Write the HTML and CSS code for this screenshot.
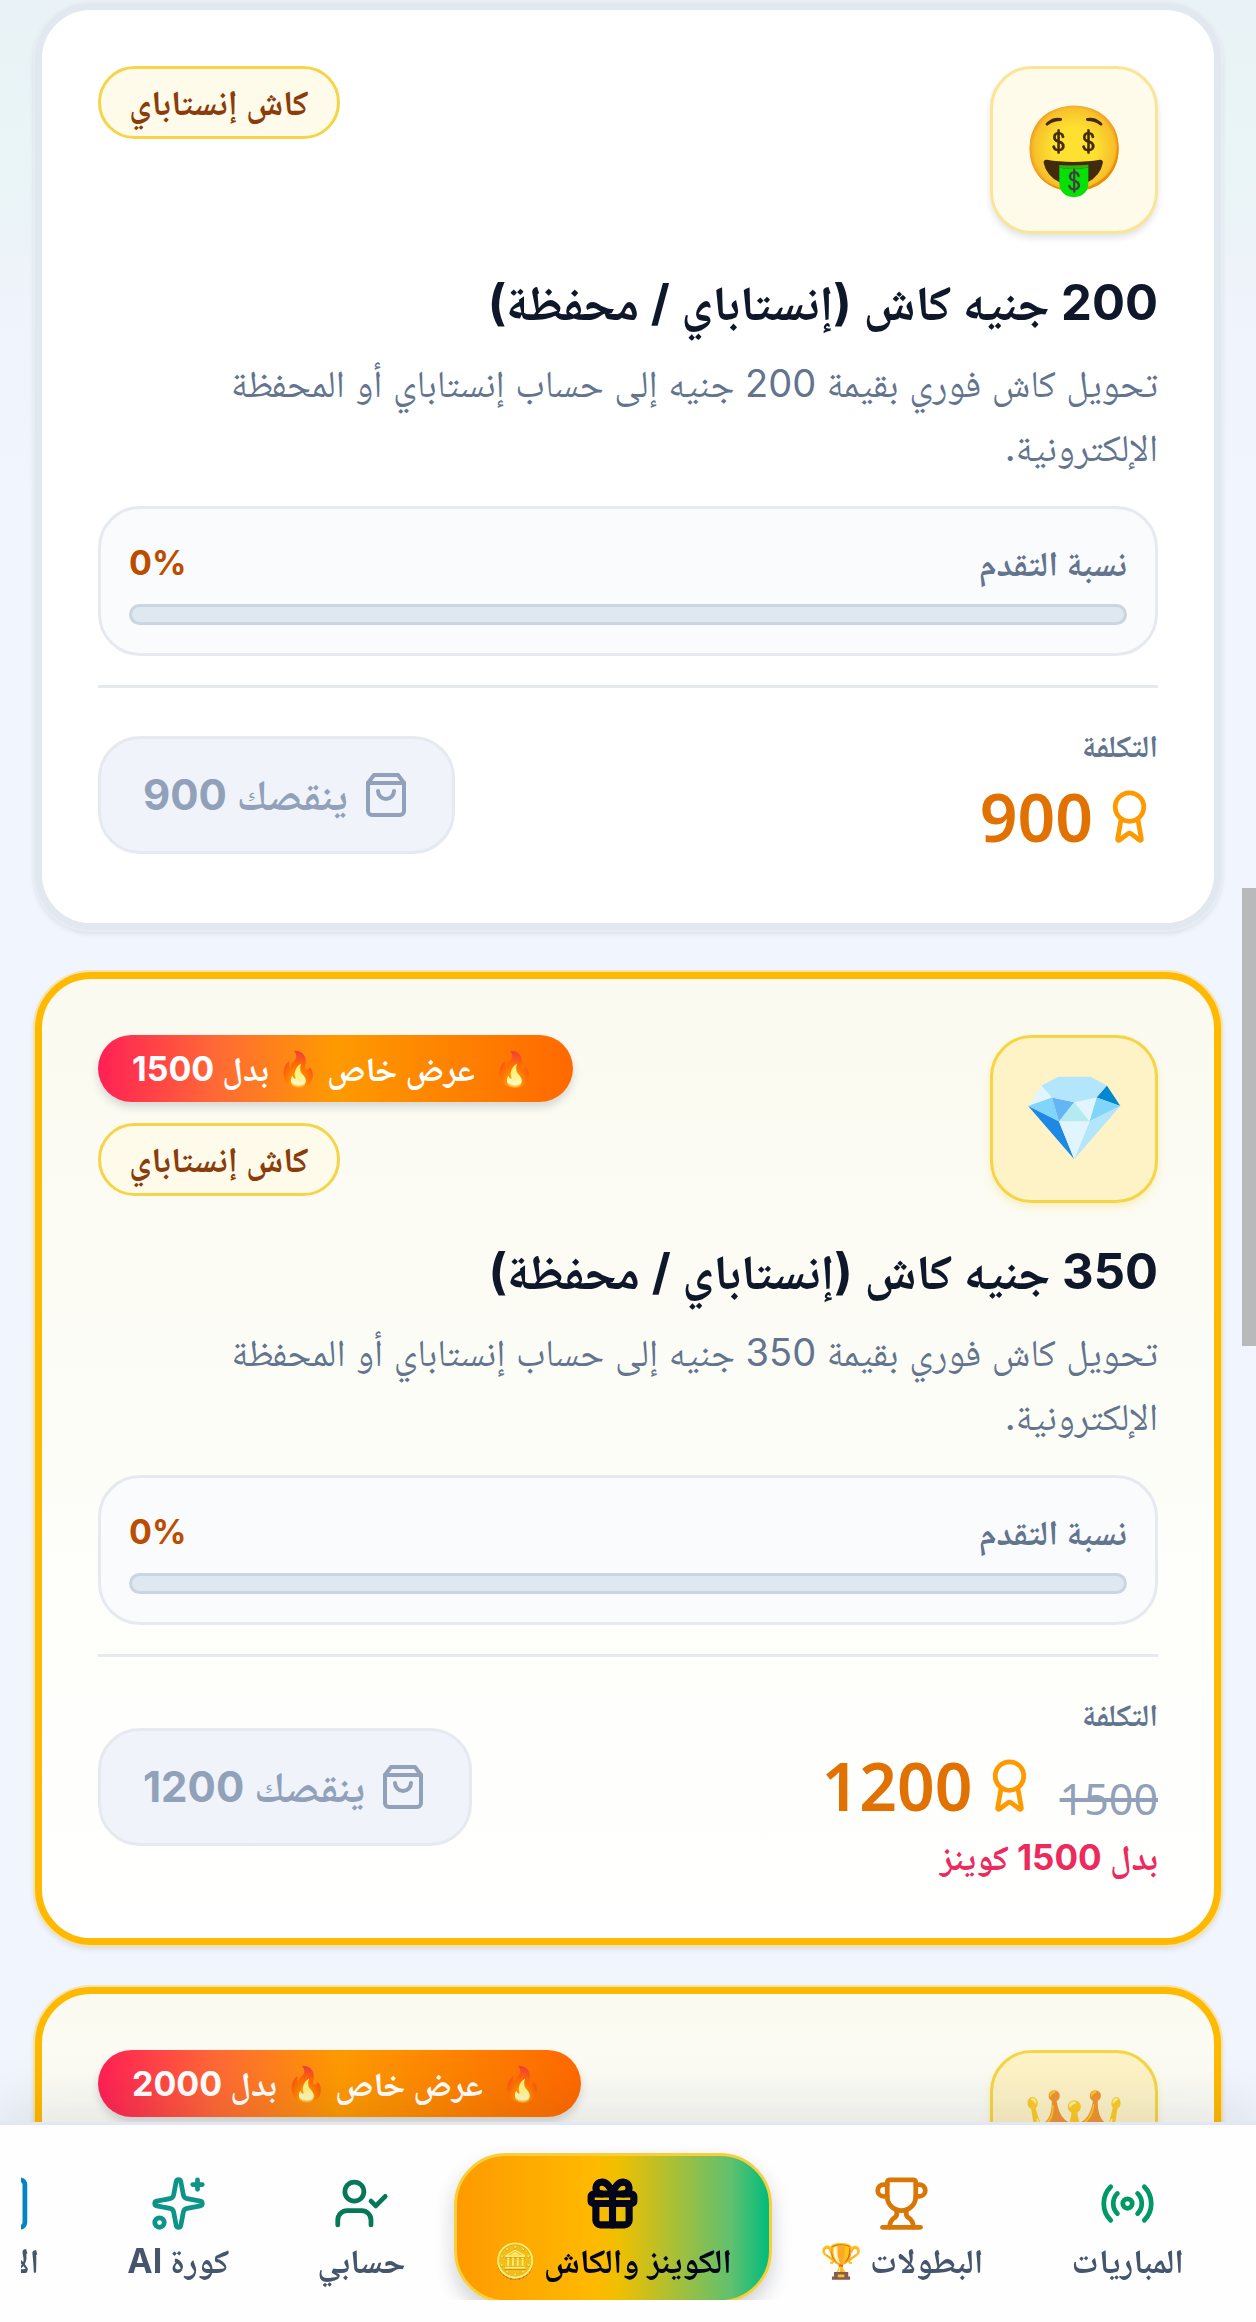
FILE: index.html
```html
<!DOCTYPE html>
<html lang="ar" dir="rtl">
<head>
  <meta charset="UTF-8">
  <meta name="viewport" content="width=device-width, initial-scale=1.0">
  <title>الكوينز والكاش</title>
  <link rel="stylesheet" href="styles.css">
</head>
<body>
  <svg class="icon-defs" aria-hidden="true">
    <symbol id="icon-award" viewBox="0 0 24 24">
      <path d="m15.477 12.89 1.515 8.526a.5.5 0 0 1-.81.47l-3.58-2.687a1 1 0 0 0-1.197 0l-3.586 2.686a.5.5 0 0 1-.81-.469l1.514-8.526" />
      <circle cx="12" cy="8" r="6" />
    </symbol>
    <symbol id="icon-bag" viewBox="0 0 24 24">
      <path d="M6 2 3 6v14a2 2 0 0 0 2 2h14a2 2 0 0 0 2-2V6l-3-4Z" />
      <path d="M3 6h18" />
      <path d="M16 10a4 4 0 0 1-8 0" />
    </symbol>
  </svg>

  <main class="rewards">
    <article class="card">
      <div class="card-head">
        <div class="card-emoji">🤑</div>
        <div class="card-badges">
          <span class="badge">كاش إنستاباي</span>
        </div>
      </div>
      <h3 class="card-title">200 جنيه كاش (إنستاباي / محفظة)</h3>
      <p class="card-text">تحويل كاش فوري بقيمة 200 جنيه إلى حساب إنستاباي أو المحفظة الإلكترونية.</p>
      <div class="progress">
        <div class="progress-row">
          <span>نسبة التقدم</span>
          <span class="progress-value" dir="ltr">0%</span>
        </div>
        <div class="progress-bar"></div>
      </div>
      <div class="card-footer">
        <div class="cost">
          <span class="cost-label">التكلفة</span>
          <div class="cost-row">
            <svg class="award"><use href="#icon-award" /></svg>
            <span class="price">900</span>
          </div>
        </div>
        <button type="button" class="buy-button" disabled>
          <svg class="bag"><use href="#icon-bag" /></svg>
          ينقصك 900
        </button>
      </div>
    </article>

    <article class="card card-offer">
      <div class="card-head">
        <div class="card-emoji">💎</div>
        <div class="card-badges">
          <span class="offer"><span>🔥</span> عرض خاص 🔥 بدل 1500</span>
          <span class="badge">كاش إنستاباي</span>
        </div>
      </div>
      <h3 class="card-title">350 جنيه كاش (إنستاباي / محفظة)</h3>
      <p class="card-text">تحويل كاش فوري بقيمة 350 جنيه إلى حساب إنستاباي أو المحفظة الإلكترونية.</p>
      <div class="progress">
        <div class="progress-row">
          <span>نسبة التقدم</span>
          <span class="progress-value" dir="ltr">0%</span>
        </div>
        <div class="progress-bar"></div>
      </div>
      <div class="card-footer">
        <div class="cost">
          <span class="cost-label">التكلفة</span>
          <div class="cost-row">
            <del class="old-price">1500</del>
            <svg class="award"><use href="#icon-award" /></svg>
            <span class="price">1200</span>
          </div>
          <span class="cost-note">بدل 1500 كوينز</span>
        </div>
        <button type="button" class="buy-button" disabled>
          <svg class="bag"><use href="#icon-bag" /></svg>
          ينقصك 1200
        </button>
      </div>
    </article>

    <article class="card card-offer">
      <div class="card-head">
        <div class="card-emoji">👑</div>
        <div class="card-badges">
          <span class="offer"><span>🔥</span> عرض خاص 🔥 بدل 2000</span>
        </div>
      </div>
    </article>
  </main>

  <div class="scrollbar"></div>

  <nav class="bottom-nav">
    <div class="nav-list">
      <a href="#" class="nav-item">
        <svg class="nav-icon matches" viewBox="0 0 24 24">
          <path d="M16.247 7.761a6 6 0 0 1 0 8.478" />
          <path d="M19.075 4.933a10 10 0 0 1 0 14.134" />
          <path d="M4.925 19.067a10 10 0 0 1 0-14.134" />
          <path d="M7.753 16.239a6 6 0 0 1 0-8.478" />
          <circle cx="12" cy="12" r="2" />
        </svg>
        <span>المباريات</span>
      </a>
      <a href="#" class="nav-item">
        <svg class="nav-icon cups" viewBox="0 0 24 24">
          <path d="M10 14.66v1.626a2 2 0 0 1-.976 1.696A5 5 0 0 0 7 21.978" />
          <path d="M14 14.66v1.626a2 2 0 0 0 .976 1.696A5 5 0 0 1 17 21.978" />
          <path d="M18 9h1.5a1 1 0 0 0 0-5H18" />
          <path d="M4 22h16" />
          <path d="M6 9a6 6 0 0 0 12 0V3a1 1 0 0 0-1-1H7a1 1 0 0 0-1 1z" />
          <path d="M6 9H4.5a1 1 0 0 1 0-5H6" />
        </svg>
        <span>البطولات 🏆</span>
      </a>
      <a href="#" class="nav-item nav-active">
        <svg class="nav-icon" viewBox="0 0 24 24">
          <rect x="3" y="8" width="18" height="4" rx="1" />
          <path d="M12 8v13" />
          <path d="M19 12v7a2 2 0 0 1-2 2H7a2 2 0 0 1-2-2v-7" />
          <path d="M7.5 8a2.5 2.5 0 0 1 0-5A4.8 8 0 0 1 12 8a4.8 8 0 0 1 4.5-5 2.5 2.5 0 0 1 0 5" />
        </svg>
        <span>الكوينز والكاش 🪙</span>
      </a>
      <a href="#" class="nav-item">
        <svg class="nav-icon account" viewBox="0 0 24 24">
          <path d="m16 11 2 2 4-4" />
          <path d="M16 21v-2a4 4 0 0 0-4-4H6a4 4 0 0 0-4 4v2" />
          <circle cx="9" cy="7" r="4" />
        </svg>
        <span>حسابي</span>
      </a>
      <a href="#" class="nav-item">
        <svg class="nav-icon ai" viewBox="0 0 24 24">
          <path d="M11.017 2.814a1 1 0 0 1 1.966 0l1.051 5.558a2 2 0 0 0 1.594 1.594l5.558 1.051a1 1 0 0 1 0 1.966l-5.558 1.051a2 2 0 0 0-1.594 1.594l-1.051 5.558a1 1 0 0 1-1.966 0l-1.051-5.558a2 2 0 0 0-1.594-1.594l-5.558-1.051a1 1 0 0 1 0-1.966l5.558-1.051a2 2 0 0 0 1.594-1.594z" />
          <path d="M20 2v4" />
          <path d="M22 4h-4" />
          <circle cx="4" cy="20" r="2" />
        </svg>
        <span>كورة AI</span>
      </a>
      <a href="#" class="nav-item nav-last">
        <svg class="nav-icon more" viewBox="0 0 24 24">
          <rect x="3" y="2" width="18" height="20" rx="2" />
        </svg>
        <span>الا</span>
      </a>
    </div>
  </nav>
</body>
</html>
```
FILE: styles.css
```css
* {
  box-sizing: border-box;
}
body {
  margin: 0;
  background: linear-gradient(#e9f2f6, #e9f5f6 160px, #eff3fb 300px, #f1f5fd 500px);
  font-family: Inter, "Noto Naskh Arabic", "Noto Sans", sans-serif;
  color: #0f172a;
}
svg {
  fill: none;
  stroke: currentColor;
  stroke-width: 2;
  stroke-linecap: round;
  stroke-linejoin: round;
}
.icon-defs {
  display: none;
}
.rewards {
  display: flex;
  flex-direction: column;
  gap: 42px;
  padding: 3px 35px 20px;
}
.card {
  padding: 56px;
  background-color: #ffffff;
  border: 7px solid #e2e8f0;
  border-radius: 56px;
  box-shadow: 0 0 0 2px #e8edf4, 0 3px 6px rgba(15, 23, 42, 0.12);
}
.card-offer {
  background: linear-gradient(#fafaf0, #fdfdf8 50%, #ffffff);
  border-color: #ffb900;
  box-shadow: 0 0 0 2px #f8e3a8, 0 3px 6px rgba(15, 23, 42, 0.15);
}
.card-head {
  display: flex;
  justify-content: space-between;
  align-items: flex-start;
}
.card-emoji {
  display: flex;
  align-items: center;
  justify-content: center;
  width: 168px;
  height: 168px;
  padding-bottom: 4px;
  font-size: 84px;
  line-height: 90px;
  background-color: #fffbeb;
  border: 3px solid #fae596;
  border-radius: 42px;
  box-shadow: 0 4px 6px rgba(15, 23, 42, 0.12);
}
.card-offer .card-emoji {
  background-color: #fef3c6;
  border-color: #f5d547;
  box-shadow: 0 4px 8px rgba(245, 213, 71, 0.3);
}
.card-badges {
  display: flex;
  flex-direction: column;
  align-items: flex-end;
  gap: 21px;
}
.badge {
  padding: 0 28px;
  font-size: 35px;
  font-weight: 700;
  line-height: 67px;
  color: #8a3d0b;
  background-color: #fffbeb;
  border: 3px solid #f5d547;
  border-radius: 40px;
}
.offer {
  display: flex;
  gap: 18px;
  padding: 0 38px 0 34px;
  font-size: 34px;
  font-weight: 700;
  line-height: 67px;
  color: #ffffff;
  background: linear-gradient(to left, #ff6900, #fe9a00 50%, #ff6a35 75%, #ff2056);
  border-radius: 40px;
  box-shadow: 0 5px 8px rgba(15, 23, 42, 0.15);
}
.card-title {
  margin: 36px 0 15px;
  font-size: 49px;
  font-weight: 700;
  line-height: 66px;
}
.card-text {
  margin: 0 0 27px;
  font-size: 38px;
  line-height: 64px;
  color: #62748e;
}
.progress {
  padding: 28px;
  background-color: #fafbfd;
  border: 3px solid #e6eaf0;
  border-radius: 42px;
}
.progress-row {
  display: flex;
  justify-content: space-between;
  margin-bottom: 15px;
  font-size: 35px;
  font-weight: 700;
  line-height: 52px;
  color: #62748e;
}
.progress-value {
  font-size: 34px;
  color: #bb4d00;
}
.progress-bar {
  height: 21px;
  background-color: #dfe7f1;
  border: 3px solid #cad5e2;
  border-radius: 12px;
}
.card-footer {
  display: flex;
  justify-content: space-between;
  align-items: center;
  margin-top: 29px;
  padding: 37px 0 2px;
  border-top: 3px solid #e6eaf0;
}
.cost-label {
  display: block;
  font-size: 31px;
  font-weight: 700;
  line-height: 42px;
  color: #62748e;
}
.cost-row {
  display: flex;
  align-items: center;
  gap: 8px;
  height: 98px;
}
.award {
  width: 57px;
  height: 57px;
  color: #fe9a00;
}
.price {
  font-family: "Noto Sans", sans-serif;
  font-size: 66px;
  font-weight: 600;
  line-height: 84px;
  color: #e17100;
}
.old-price {
  margin-left: 14px;
  padding-top: 28px;
  font-family: "Noto Sans", sans-serif;
  font-size: 43px;
  line-height: 60px;
  color: #90a1b9;
}
.cost-note {
  display: block;
  font-size: 35px;
  font-weight: 700;
  line-height: 46px;
  color: #ec2a5e;
}
.buy-button {
  display: flex;
  align-items: center;
  gap: 14px;
  height: 118px;
  padding: 0 42px;
  font-family: inherit;
  font-size: 42px;
  font-weight: 700;
  line-height: 60px;
  color: #90a1b9;
  background-color: #f0f4fa;
  border: 3px solid #e5e9f0;
  border-radius: 42px;
}
.bag {
  width: 48px;
  height: 48px;
}
.scrollbar {
  position: fixed;
  top: 888px;
  right: 0;
  width: 14px;
  height: 458px;
  background-color: #b7b9bb;
}
.bottom-nav {
  position: fixed;
  right: 0;
  bottom: 0;
  left: 0;
  padding: 0 21px 22px;
  background-color: #fefefe;
  border-top: 3px solid #e3e7f1;
  box-shadow: 0 -10px 60px rgba(15, 23, 42, 0.12);
}
.nav-list {
  display: flex;
  gap: 8px;
  height: 175px;
  padding: 28px 11px 0;
  overflow: hidden;
}
.nav-item {
  display: flex;
  flex: none;
  flex-direction: column;
  align-items: center;
  gap: 4px;
  height: 150px;
  padding: 22px 40px 0;
  font-size: 34px;
  font-weight: 700;
  line-height: 50px;
  color: #45556c;
  text-decoration: none;
  white-space: nowrap;
}
.nav-active {
  padding: 19px 37px 0;
  color: #020618;
  background: linear-gradient(to left, #00bc7d, #5fc06f 12%, #efbf00 48%, #ffb900 56%, #fe9a00);
  border: 3px solid #f7cf3c;
  border-radius: 52px;
  box-shadow: 0 10px 20px rgba(15, 23, 42, 0.2);
}
.nav-active svg {
  stroke-width: 3;
}
.nav-icon {
  width: 57px;
  height: 57px;
}
.nav-last {
  width: 152px;
}
.nav-last span {
  align-self: flex-start;
}
.matches {
  color: #009966;
}
.cups {
  color: #d97706;
}
.account {
  color: #047857;
}
.ai {
  color: #0d9488;
}
.more {
  color: #0284c7;
}
```
